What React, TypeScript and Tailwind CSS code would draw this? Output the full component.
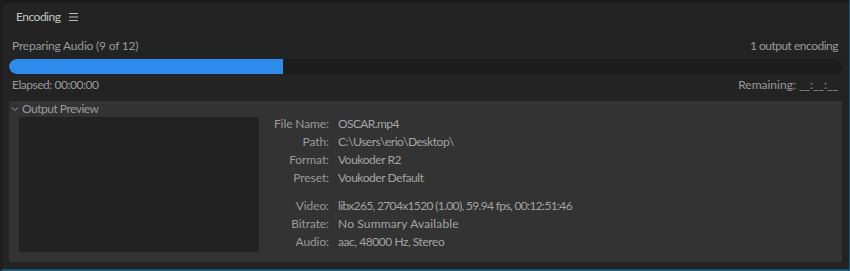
const info = [
  { label: "File Name:", value: "OSCAR.mp4", tight: "tracking-[-0.6px]" },
  { label: "Path:", value: "C:\\Users\\erio\\Desktop\\", tight: "tracking-[-0.45px]" },
  { label: "Format:", value: "Voukoder R2", tight: "tracking-[-0.45px]" },
  { label: "Preset:", value: "Voukoder Default", tight: "tracking-[-0.45px]" },
];

const stream = [
  {
    label: "Video:",
    value: "libx265, 2704x1520 (1.00), 59.94 fps, 00:12:51:46",
    tight: "tracking-[-0.65px]",
  },
  { label: "Bitrate:", value: "No Summary Available", tight: "tracking-[0.15px]" },
  { label: "Audio:", value: "aac, 48000 Hz, Stereo", tight: "tracking-[-0.45px]" },
];

function InfoRows({ rows }: any) {
  return (
    <div className="grid grid-cols-[70px_auto] gap-x-[9px]">
      {rows.map((row: any) => (
        <div key={row.label} className="contents">
          <span className="h-[18px] text-right leading-[18px] tracking-[-0.1px]">
            {row.label}
          </span>
          <span className={`h-[18px] leading-[18px] text-[#a4a4a4] ${row.tight}`}>
            {row.value}
          </span>
        </div>
      ))}
    </div>
  );
}

export default function App() {
  const fillPercent = 32.9;

  return (
    <div
      className="flex h-[271px] w-[850px] flex-col overflow-hidden border-b-2 border-r border-l-[3px] border-b-[#1b5677] border-r-[#1b5677] border-l-[#1d1d1d] bg-[#232323] text-[12px] text-[#9a9a9a]"
      style={{ fontFamily: "Lato, 'Noto Sans', sans-serif" }}
    >
      <div className="h-[3px] shrink-0 bg-[#1a1a1a]" />

      {/* tab header */}
      <div className="flex h-[29px] shrink-0 items-center gap-[9px] pb-[2px] pl-[13px]">
        <span className="text-[12px] tracking-[-0.5px] text-[#c4c4c4]">Encoding</span>
        <svg width="10" height="8" viewBox="0 0 10 8" className="mt-[1px]">
          <path d="M0 0.5h9M0 4h9M0 7.5h9" stroke="#bcbcbc" strokeWidth="1" />
        </svg>
      </div>

      <div className="flex flex-1 flex-col pl-[6px] pr-[7px]">
        <div className="flex items-center justify-between px-[3px] pt-[5px]">
          <span className="tracking-[-0.2px]">Preparing Audio (9 of 12)</span>
          <span className="pr-[1px] tracking-[-0.5px]">1 output encoding</span>
        </div>

        <div className="mt-[4px] h-[15px] overflow-hidden rounded-full bg-[#1c1c1c]">
          <div
            className="h-full rounded-l-full bg-[#2d8ceb]"
            style={{ width: `${fillPercent}%` }}
          />
        </div>

        <div className="flex items-center justify-between px-[3px] pt-[2px]">
          <span className="tracking-[-0.47px]">Elapsed: 00:00:00</span>
          <span className="pr-[1px]">Remaining: __:__:__</span>
        </div>

        {/* output preview */}
        <div className="mt-[7px] flex h-[161px] flex-col bg-[#333333]">
          <div className="flex h-[16px] items-center gap-[3px] pl-[2px]">
            <svg width="8" height="6" viewBox="0 0 8 6">
              <path d="M1 1.5l3 3 3-3" fill="none" stroke="#9c9c9c" strokeWidth="1" />
            </svg>
            <span className="leading-none tracking-[-0.5px]">Output Preview</span>
          </div>

          <div className="flex pl-[10px]">
            <div className="h-[135px] w-[240px] shrink-0 bg-[#222222]" />

            <div className="-mt-[2px] flex flex-col">
              <InfoRows rows={info} />
              <div className="mt-[10px]">
                <InfoRows rows={stream} />
              </div>
            </div>
          </div>
        </div>
      </div>
    </div>
  );
}
